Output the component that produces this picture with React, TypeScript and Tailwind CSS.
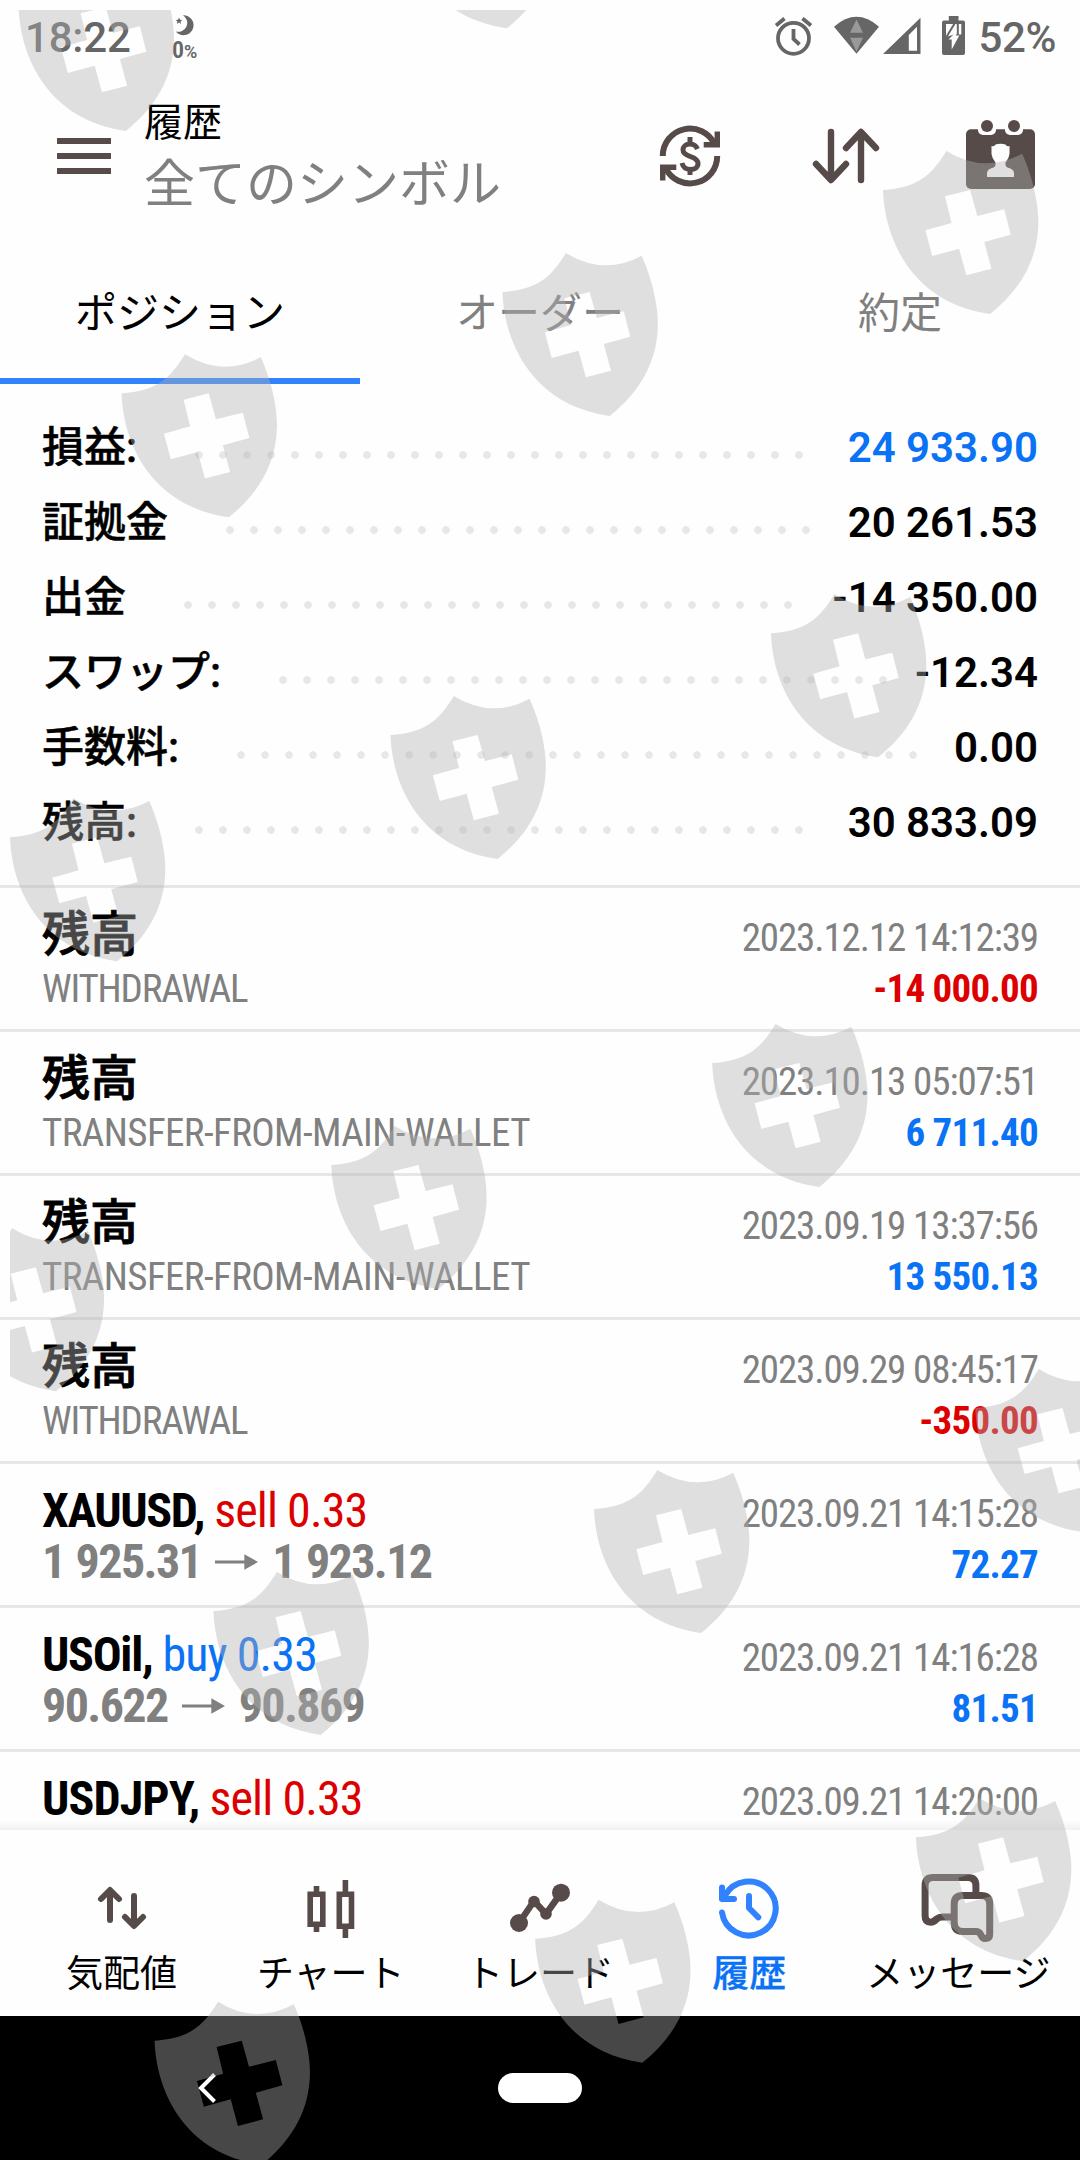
import type { ReactNode } from "react";

const BLUE = "text-[#0a72f5]";
const RED = "text-[#dc0000]";

type SummaryRow = { label: string; value: string; labelWidth: string; dots: string; color?: string };

const summary: SummaryRow[] = [
  { label: "損益:", value: "24 933.90", labelWidth: "w-[145px]", dots: "w-[624px]", color: BLUE },
  { label: "証拠金", value: "20 261.53", labelWidth: "w-[176px]", dots: "w-[600px]" },
  { label: "出金", value: "-14 350.00", labelWidth: "w-[134px]", dots: "w-[624px]" },
  { label: "スワップ:", value: "-12.34", labelWidth: "w-[229px]", dots: "w-[624px]" },
  { label: "手数料:", value: "0.00", labelWidth: "w-[187px]", dots: "w-[696px]" },
  { label: "残高:", value: "30 833.09", labelWidth: "w-[145px]", dots: "w-[624px]" },
];

type Entry = {
  title: string;
  titleStyle: string;
  side?: string;
  sideColor?: string;
  note?: string;
  noteStyle?: string;
  open?: string;
  close?: string;
  time: string;
  amount: string;
  amountColor: string;
};

const BALANCE = "font-medium [-webkit-text-stroke:0.9px_black]";
const SHORT_NOTE = "tracking-[-1.2px]";
const LONG_NOTE = "tracking-[-0.6px]";

const entries: Entry[] = [
  { title: "残高", titleStyle: BALANCE, note: "WITHDRAWAL", noteStyle: SHORT_NOTE, time: "2023.12.12 14:12:39", amount: "-14 000.00", amountColor: RED },
  { title: "残高", titleStyle: BALANCE, note: "TRANSFER-FROM-MAIN-WALLET", noteStyle: LONG_NOTE, time: "2023.10.13 05:07:51", amount: "6 711.40", amountColor: BLUE },
  { title: "残高", titleStyle: BALANCE, note: "TRANSFER-FROM-MAIN-WALLET", noteStyle: LONG_NOTE, time: "2023.09.19 13:37:56", amount: "13 550.13", amountColor: BLUE },
  { title: "残高", titleStyle: BALANCE, note: "WITHDRAWAL", noteStyle: SHORT_NOTE, time: "2023.09.29 08:45:17", amount: "-350.00", amountColor: RED },
  { title: "XAUUSD,", titleStyle: "font-bold tracking-[-1.4px]", side: "sell 0.33", sideColor: RED, open: "1 925.31", close: "1 923.12", time: "2023.09.21 14:15:28", amount: "72.27", amountColor: BLUE },
  { title: "USOil,", titleStyle: "font-bold tracking-[-1.3px]", side: "buy 0.33", sideColor: BLUE, open: "90.622", close: "90.869", time: "2023.09.21 14:16:28", amount: "81.51", amountColor: BLUE },
  { title: "USDJPY,", titleStyle: "font-bold tracking-[-0.9px]", side: "sell 0.33", sideColor: RED, time: "2023.09.21 14:20:00", amount: "", amountColor: BLUE },
];

const shields: [number, number][] = [
  [18.6, -32], [399.8, -134.7], [121.6, 354.3], [502.5, 253], [883, 151], [390.5, 696],
  [10, 798.3], [771, 594.3], [331.3, 1126], [-51.3, 1228.3], [712.2, 1024], [213.5, 1572],
  [594, 1470], [975.3, 1369], [916, 1798.3], [535.2, 1899.7], [154.6, 2001.7],
];

function StatusBar() {
  return (
    <header className="flex h-[72px] items-start justify-between pl-[25px] pr-[24px] text-[#666666]">
      <div className="flex">
        <span className="mt-[13px] w-[106px] text-[42px] font-medium tracking-[-0.2px] leading-[49px]">18:22</span>
        <div className="ml-[41px] mt-[14px] flex flex-col">
          <svg className="ml-[3px] h-[22px] w-[22px]" viewBox="0 0 22 22" fill="currentColor">
            <path d="M8 1.2A10 10 0 1 1 .8 17.5 A9 9 0 0 0 8 1.2Z" />
            <path d="M4 3.4l1 2.4 2.4.1-1.900 1.600.7 2.500L4 8.600l-2.200 1.400.7-2.500L.6 5.900 3 5.800z" />
          </svg>
          <span className="mt-[3px] flex items-baseline font-semibold leading-[22px]">
            <span className="text-[24px] [font-stretch:80%]">0</span>
            <span className="text-[18px] [font-stretch:90%]">%</span>
          </span>
        </div>
      </div>
      <div className="flex">
        <svg className="mt-[14px] h-[44px] w-[192px]" viewBox="774 14 192 44" fill="none">
          <circle cx="793.5" cy="38.3" r="15.500" stroke="#666" strokeWidth="3.800" />
          <path d="M793.500 29v10l6 5.500M776 25.500l8.500-7M811 25.500l-8.500-7" stroke="#666" strokeWidth="3.800" />
          <path d="M834 26.700Q856.500 7 879 26.700L856.500 53.700z" fill="#666" />
          <path d="M856.500 19.500l6.500 13.200h-13zM850 37.700h13l-6.500 14z" fill="#999" />
          <path d="M883 54L920.500 17.700V54zM908.800 35v15.700H917V26.700z" fill="#666" fillRule="evenodd" />
          <path d="M948.800 16h9.700v4.500h4.500a2 2 0 0 1 2 2V53a2 2 0 0 1-2 2H944a2 2 0 0 1-2-2V22.500a2 2 0 0 1 2-2h4.800z" fill="#666" />
          <path d="M946 24h15.300v10.500H954L946 37z" fill="#fefefe" />
          <path d="M955.500 22L945.500 38.500M957.800 23v13" stroke="#666" strokeWidth="2" />
          <path d="M953.500 34.500L948.500 39.500h3.200v10L959.300 35.500h-3.500l1-6z" fill="#fefefe" />
        </svg>
        <span className="ml-[11px] mt-[13px] w-[79px] whitespace-nowrap text-right text-[42px] font-medium tracking-[-0.4px] leading-[49px]">52%</span>
      </div>
    </header>
  );
}

function AppBar() {
  return (
    <div className="flex h-[168px] pl-[57px]">
      <div className="mt-[66px] flex w-[54px] flex-col gap-[9px]">
        <div className="h-[6px] bg-[#564b48]" />
        <div className="h-[6px] bg-[#564b48]" />
        <div className="h-[6px] bg-[#564b48]" />
      </div>
      <div className="ml-[33px] mt-[26px] flex flex-col">
        <span className="text-[39px] leading-[50px] text-black">履歴</span>
        <span className="mt-[5px] text-[51px] leading-[64px] text-[#808080]">全てのシンボル</span>
      </div>
      <svg className="ml-auto mr-[40px] mt-[46px] h-[76px] w-[384px] shrink-0" viewBox="656 118 384 76" fill="none" stroke="#564b48" strokeWidth="6">
        <path d="M662.800 156A27.200 27.200 0 0 1 714.500 144M717.200 156A27.200 27.200 0 0 1 665.500 168" />
        <path d="M717.300 131.500V144.800H703.700M662.700 180.500V167.200H676.300" strokeWidth="5.400" />
        <path d="M708 144l8-4v6z M672 168l-8 4v-6z" stroke="none" fill="#564b48" />
        <path d="M697.500 149C696 145.500 693.500 144 690 144C685.500 144 683 146.800 683 149.800C683 153.500 686 155 690 156.300C694.500 157.800 698 159.500 698 163.500C698 167.300 694.800 169.500 690.500 169.500C686 169.500 683 167 682 163M690 137v7M690 169v6" strokeWidth="5" />
        <path d="M831 132v46M816 164l15 16 15-16M861 180v-46M846 148l15-16 15 16" strokeWidth="6.400" strokeLinecap="round" strokeLinejoin="round" />
        <g stroke="none">
          <path d="M971 129.300h59a5 5 0 0 1 5 5V184a5 5 0 0 1-5 5H971a5 5 0 0 1-5-5V134.300a5 5 0 0 1 5-5z" fill="#564b48" />
          <path d="M978 129v1a5 5 0 0 0 5 5h8a5 5 0 0 0 5-5v-1zM1005 129v1a5 5 0 0 0 5 5h8a5 5 0 0 0 5-5v-1z" fill="#fefefe" />
          <circle cx="987" cy="126" r="6" fill="#564b48" />
          <circle cx="1014" cy="126" r="6" fill="#564b48" />
          <path d="M991.500 146q3 1 4-1.500 5-1.500 10 0 1 2.500 4 1.500v8q-.5 4.500-4 8.500-.5 4 2 5 6.500 1.500 6.500 5.500v4H987v-4q0-4 6.500-5.500 2.500-1 2-5-3.500-4-4-8.500z" fill="#fefefe" />
        </g>
      </svg>
    </div>
  );
}

function Tabs() {
  const tabs = ["ポジション", "オーダー", "約定"];
  return (
    <nav className="grid h-[144px] grid-cols-3">
      {tabs.map((tab, i) => (
        <div
          key={tab}
          className={
            "flex items-center justify-center border-b-[6px] pt-[10px] text-[42px] leading-[60px] " +
            (i === 0 ? "border-[#3082ff] text-black" : "border-transparent text-[#808080]")
          }
        >
          {tab}
        </div>
      ))}
    </nav>
  );
}

function Summary() {
  return (
    <section className="flex h-[501px] flex-col pl-[42px] pr-[42px] pt-[26px]">
      {summary.map((row) => (
        <div key={row.label} className="flex h-[75px] items-center text-[42px] leading-[75px]">
          <span className={"shrink-0 font-medium text-black [-webkit-text-stroke:0.5px_black] " + row.labelWidth}>{row.label}</span>
          <span
            className={
              "mt-[15px] h-[24px] shrink-0 bg-[radial-gradient(circle_at_center,#e7e7e7_3.4px,transparent_4.2px)] bg-[length:24px_24px] " +
              row.dots
            }
          />
          <span className={"ml-auto whitespace-nowrap font-semibold " + (row.color ?? "text-black")}>{row.value}</span>
        </div>
      ))}
    </section>
  );
}

function Arrow() {
  return (
    <svg className="mr-[14px] ml-[14px] inline-block h-[16px] w-[43px] -translate-y-[3px]" viewBox="0 0 44 16" fill="#808080">
      <path d="M0 6.500h30V0l14 8-14 8V9.500H0z" />
    </svg>
  );
}

function HistoryList() {
  return (
    <section className="h-[945px] overflow-hidden [font-stretch:75%]">
      {entries.map((e, i) => (
        <article key={i} className="flex h-[144px] flex-col border-t-[3px] border-[#e6e6e6] pl-[42px] pr-[42px] pt-[21px]">
          <div className="flex items-baseline justify-between whitespace-nowrap leading-[52px]">
            <span className="text-[48px]">
              <span className={"text-black " + e.titleStyle}>{e.title}</span>
              {e.side && <span className={"tracking-[-0.9px] " + e.sideColor}> {e.side}</span>}
            </span>
            <span className="text-[39px] tracking-[-1.1px] text-[#808080]">{e.time}</span>
          </div>
          <div className="flex items-baseline justify-between whitespace-nowrap leading-[50px] text-[#808080]">
            {e.note && <span className={"text-[39px] " + e.noteStyle}>{e.note}</span>}
            {e.open && (
              <span className="text-[48px] font-bold leading-[44px] tracking-[-1.6px] [word-spacing:1.5px]">
                {e.open}
                <Arrow />
                {e.close}
              </span>
            )}
            <span className={"text-[39px] font-bold tracking-[-0.75px] " + e.amountColor}>{e.amount}</span>
          </div>
        </article>
      ))}
    </section>
  );
}

function NavItem({ label, active, children }: { label: string; active?: boolean; children: ReactNode }) {
  return (
    <div className="flex flex-col items-center">
      {children}
      <span
        className={
          "whitespace-nowrap text-[37px] leading-[54px] " +
          (active ? "font-medium text-[#0a72f5] [-webkit-text-stroke:0.3px_#0a72f5]" : "text-black")
        }
      >
        {label}
      </span>
    </div>
  );
}

const navIcon = "mt-[38px] h-[80px] w-[80px]";

function BottomNav() {
  return (
    <nav className="relative grid h-[186px] grid-cols-5 bg-[#fefefe] px-[17px]">
      <div className="absolute -top-[10px] left-0 h-[10px] w-full bg-linear-to-b from-transparent to-black/5" />
      <NavItem label="気配値">
        <svg className={navIcon} viewBox="82 1868 80 80" fill="none" stroke="#564b48" strokeWidth="6" strokeLinecap="round" strokeLinejoin="round">
          <path d="M110 1920v-29M101 1899l9-9 9 9M134 1896v29M125 1917l9 9 9-9" />
        </svg>
      </NavItem>
      <NavItem label="チャート">
        <svg className={navIcon} viewBox="291 1868 80 80" fill="none" stroke="#564b48" strokeWidth="5.600">
          <path d="M310.200 1894.200h12.600v30h-12.600zM316.500 1886v6M316.500 1926v6M339.300 1894.200h12.200v32h-12.200zM345.400 1880v12M345.400 1928v10" />
        </svg>
      </NavItem>
      <NavItem label="トレード">
        <svg className={navIcon} viewBox="500 1868 80 80" fill="#564b48">
          <path d="M519 1923l15-22 12 13 15-21" fill="none" stroke="#564b48" strokeWidth="6.500" strokeLinejoin="round" />
          <circle cx="519" cy="1923" r="9" />
          <circle cx="534" cy="1901.500" r="5.800" />
          <circle cx="546" cy="1914" r="5.800" />
          <circle cx="561" cy="1892.700" r="9" />
        </svg>
      </NavItem>
      <NavItem label="履歴" active>
        <svg className={navIcon} viewBox="709 1868 80 80" fill="none" stroke="#3082ff" strokeWidth="6" strokeLinecap="round" strokeLinejoin="round">
          <path d="M722 1912.500A27 27 0 1 0 725 1895.500L722 1899M722 1887.500V1899h12M749 1896v12l9.300 9.300" />
        </svg>
      </NavItem>
      <NavItem label="メッセージ">
        <svg className={navIcon} viewBox="918.4 1868 80 80" fill="none" stroke="#564b48" strokeWidth="7" strokeLinecap="round" strokeLinejoin="round">
          <path d="M976.300 1891V1885.500q0-8-8-8H933.500q-8 0-8 8V1916q0 6.200 5.500 6.200 3 0 6-3.200 2.500-2 6-2h8" />
          <path d="M954.600 1904q0-8.500 8.500-8.500h18.500q8.500 0 8.500 8.500v30q0 4.500-4.500 4.500-3 0-4.500-4-1.500-3-5-3h-12.500q-9 0-9-9z" />
        </svg>
      </NavItem>
    </nav>
  );
}

function SystemBar() {
  return (
    <footer className="grid h-[144px] grid-cols-[1fr_84px_1fr] items-center bg-black">
      <svg className="ml-[196px] h-[34px] w-[24px]" viewBox="0 0 24 34" fill="none" stroke="#fff" strokeWidth="4">
        <path d="M18.500 3.500L5 17l13.500 13.500" />
      </svg>
      <div className="h-[30px] w-[84px] rounded-full bg-white" />
    </footer>
  );
}

function ShieldOverlay() {
  return (
    <svg className="pointer-events-none absolute left-[10px] top-[10px] h-[2150px] w-[1070px]" viewBox="10 10 1070 2150" fill="#b2b2b2" fillOpacity="0.4" fillRule="evenodd">
      {shields.map(([x, y], i) => (
        <path
          key={i}
          transform={`translate(${x} ${y}) scale(0.3444 0.3333)`}
          d="M0 117C100 110 140 75 184 0Q294 70 404 8C440 90 452 170 451 215C450 330 395 420 311 489C80 455 4 260 0 117ZM180 136L199 216 123 238 143 315 221 293 242 373 315 353 294 273 371 251 352 175 274 195 253 117Z"
        />
      ))}
    </svg>
  );
}

export default function App() {
  return (
    <main
      lang="ja"
      className="relative flex h-[2160px] w-[1080px] flex-col overflow-hidden bg-[#fefefe] font-[Roboto,'Noto_Sans_CJK_JP',sans-serif]"
    >
      <StatusBar />
      <AppBar />
      <Tabs />
      <Summary />
      <HistoryList />
      <BottomNav />
      <SystemBar />
      <ShieldOverlay />
    </main>
  );
}
